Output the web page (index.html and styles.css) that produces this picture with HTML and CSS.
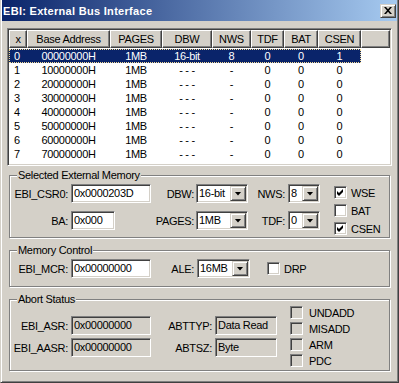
FILE: index.html
```html
<!DOCTYPE html>
<html><head>
<meta charset="utf-8">
<title>EBI: External Bus Interface</title>
<link rel="stylesheet" href="styles.css">
</head>
<body>
<div class="window">
 <div class="titlebar">
  <span class="title">EBI: External Bus Interface</span>
  <span class="closebtn"><svg width="8" height="7" viewBox="0 0 8 7"><path d="M0 0H2L4 2.3L6 0H8L5 3.5L8 7H6L4 4.7L2 7H0L3 3.5Z"/></svg></span>
 </div>

 <div class="client">

  <div class="listview">
   <div class="lvhead">
    <span class="hd c0">x</span>
    <span class="hd c1">Base Address</span>
    <span class="hd c2">PAGES</span>
    <span class="hd c3">DBW</span>
    <span class="hd c4">NWS</span>
    <span class="hd c5">TDF</span>
    <span class="hd c6">BAT</span>
    <span class="hd c7">CSEN</span>
    <span class="hd fill"></span>
   </div>
   <div class="lvbody">
    <div class="lvrow sel"><span class="c0">0</span><span class="c1">00000000H</span><span class="c2">1MB</span><span class="c3">16-bit</span><span class="c4">8</span><span class="c5">0</span><span class="c6">0</span><span class="c7">1</span></div>
    <div class="lvrow"><span class="c0">1</span><span class="c1">10000000H</span><span class="c2">1MB</span><span class="c3">- - -</span><span class="c4">-</span><span class="c5">0</span><span class="c6">0</span><span class="c7">0</span></div>
    <div class="lvrow"><span class="c0">2</span><span class="c1">20000000H</span><span class="c2">1MB</span><span class="c3">- - -</span><span class="c4">-</span><span class="c5">0</span><span class="c6">0</span><span class="c7">0</span></div>
    <div class="lvrow"><span class="c0">3</span><span class="c1">30000000H</span><span class="c2">1MB</span><span class="c3">- - -</span><span class="c4">-</span><span class="c5">0</span><span class="c6">0</span><span class="c7">0</span></div>
    <div class="lvrow"><span class="c0">4</span><span class="c1">40000000H</span><span class="c2">1MB</span><span class="c3">- - -</span><span class="c4">-</span><span class="c5">0</span><span class="c6">0</span><span class="c7">0</span></div>
    <div class="lvrow"><span class="c0">5</span><span class="c1">50000000H</span><span class="c2">1MB</span><span class="c3">- - -</span><span class="c4">-</span><span class="c5">0</span><span class="c6">0</span><span class="c7">0</span></div>
    <div class="lvrow"><span class="c0">6</span><span class="c1">60000000H</span><span class="c2">1MB</span><span class="c3">- - -</span><span class="c4">-</span><span class="c5">0</span><span class="c6">0</span><span class="c7">0</span></div>
    <div class="lvrow"><span class="c0">7</span><span class="c1">70000000H</span><span class="c2">1MB</span><span class="c3">- - -</span><span class="c4">-</span><span class="c5">0</span><span class="c6">0</span><span class="c7">0</span></div>
   </div>
  </div><!-- listview -->

  <fieldset class="group grp-sel">
   <legend>Selected External Memory</legend>
   <div class="grpbody top">
    <div class="grid f1">
     <span class="lbl">EBI_CSR0:</span>
     <span class="edit w80">0x0000203D</span>
     <span class="lbl">DBW:</span>
     <span class="combo wide"><span class="val">16-bit</span><span class="dd"></span></span>
     <span class="lbl">NWS:</span>
     <span class="combo narrow"><span class="val">8</span><span class="dd"></span></span>
     <span class="lbl">BA:</span>
     <span class="edit w44">0x000</span>
     <span class="lbl">PAGES:</span>
     <span class="combo wide"><span class="val">1MB</span><span class="dd"></span></span>
     <span class="lbl">TDF:</span>
     <span class="combo narrow"><span class="val">0</span><span class="dd"></span></span>
    </div>
    <div class="checks c18">
     <label class="chk"><span class="cb"><svg width="7" height="7" viewBox="0 0 7 7"><path d="M0 2L2 4L6 0V3L2 7L0 5Z"/></svg></span>WSE</label>
     <label class="chk"><span class="cb"></span>BAT</label>
     <label class="chk"><span class="cb"><svg width="7" height="7" viewBox="0 0 7 7"><path d="M0 2L2 4L6 0V3L2 7L0 5Z"/></svg></span>CSEN</label>
    </div>
   </div>
  </fieldset>

  <fieldset class="group grp-mem">
   <legend>Memory Control</legend>
   <div class="grid f2">
    <span class="lbl">EBI_MCR:</span>
    <span class="edit w80">0x00000000</span>
    <span class="lbl">ALE:</span>
    <span class="combo ale"><span class="val">16MB</span><span class="dd"></span></span>
    <label class="chk drp"><span class="cb"></span>DRP</label>
   </div>
  </fieldset>

  <fieldset class="group grp-abort">
   <legend>Abort Status</legend>
   <div class="grpbody mid">
    <div class="grid f3">
     <span class="lbl">EBI_ASR:</span>
     <span class="field w80">0x00000000</span>
     <span class="lbl">ABTTYP:</span>
     <span class="field w62">Data Read</span>
     <span class="lbl">EBI_AASR:</span>
     <span class="field w80">0x00000000</span>
     <span class="lbl">ABTSZ:</span>
     <span class="field w62">Byte</span>
    </div>
    <div class="checks c16">
     <label class="chk"><span class="cb off"></span>UNDADD</label>
     <label class="chk"><span class="cb off"></span>MISADD</label>
     <label class="chk"><span class="cb off"></span>ARM</label>
     <label class="chk"><span class="cb off"></span>PDC</label>
    </div>
   </div>
  </fieldset>

 </div><!-- client -->
</div><!-- window -->
</body></html>
```

FILE: styles.css
```css
html, body{
  margin: 0;
  padding: 0;
  background: #d4d0c8;
}
body{
  font: 11px "Liberation Sans", Arial, sans-serif;
  letter-spacing: -0.3px;
  color: #000;
}

/* window frame */
.window{
  box-sizing: border-box;
  width: 399px;
  height: 383px;
  border: 1px solid;
  border-top: 0;
  border-color: #d4d0c8 #404040 #404040 #d4d0c8;
  box-shadow: inset 1px 0 #fff, inset -1px -1px #808080;
  padding: 0 1px 1px 1px;
  background: #d4d0c8;
}
.titlebar{
  height: 21px;
  display: flex;
  align-items: center;
  justify-content: space-between;
  padding: 0 1px 0 1px;
  background: linear-gradient(to right, #0a246a, #a6caf0);
}
.title{
  color: #fff;
  font-weight: bold;
  letter-spacing: 0.3px;
  padding-top: 1px;
}
.closebtn{
  box-sizing: border-box;
  width: 16px;
  height: 14px;
  display: flex;
  align-items: center;
  justify-content: center;
  background: #d4d0c8;
  border: 1px solid;
  border-color: #d4d0c8 #404040 #404040 #d4d0c8;
  box-shadow: inset 1px 1px #fff, inset -1px -1px #808080;
}
.closebtn svg{
  display: block;
}

.client{
  padding: 7px 5px 0 5px;
}

/* list view */
.listview{
  box-sizing: border-box;
  height: 138px;
  border: 1px solid;
  border-color: #808080 #fff #fff #808080;
  box-shadow: inset 1px 1px #404040, inset -1px -1px #d4d0c8;
  padding: 1px;
  background: #fff;
  overflow: hidden;
}
.lvhead{
  display: flex;
  height: 18px;
}
.hd{
  box-sizing: border-box;
  height: 18px;
  line-height: 16px;
  text-align: center;
  background: #d4d0c8;
  border: 1px solid;
  border-color: #fff #404040 #404040 #fff;
  box-shadow: inset -1px -1px #808080;
}
.hd.fill{
  flex: 1;
}
.c0{ width: 18px; }
.c1{ width: 83px; }
.c2{ width: 52px; }
.c3{ width: 50px; }
.c4{ width: 39px; }
.c5{ width: 33px; }
.c6{ width: 34px; }
.c7{ width: 43px; }
.lvbody{
  padding-top: 1px;
}
.lvrow{
  display: flex;
  width: 352px;
  height: 14px;
  line-height: 14px;
}
.lvrow span{
  flex: none;
  text-align: center;
}
.lvrow span.c0{
  text-align: left;
  box-sizing: border-box;
  padding-left: 5px;
}
.lvrow.sel{
  background: #0a246a;
  color: #fff;
  outline: 1px dotted #f5db95;
  outline-offset: -1px;
}

/* group boxes */
.group{
  margin: 6px 2px 0 2px;
  padding: 2px 1px 0 1px;
  border: 1px solid #808080;
  box-shadow: inset 1px 1px #fff, 1px 1px #fff;
  min-width: 0;
}
.group legend{
  margin-left: 6px;
  padding: 0 1px;
  line-height: 13px;
  background: #d4d0c8;
}
.grp-sel{ margin-top: 3px; padding-bottom: 2px; }
.grp-mem{ padding-bottom: 8px; }
.grp-abort{ padding-top: 0; padding-bottom: 3px; }

.grpbody{
  display: flex;
}
.grpbody.top{ align-items: flex-start; }
.grpbody.mid{ align-items: center; }

.grid{
  display: grid;
  align-items: center;
}
.f1{
  grid-template-columns: 58px 82px 44px 53px 38px 34px;
  grid-template-rows: 19px 19px;
  row-gap: 8px;
}
.f2{
  grid-template-columns: 58px 82px 44px 55px auto;
  grid-template-rows: 19px;
}
.f3{
  grid-template-columns: 58px 82px 62px 64px;
  grid-template-rows: 19px 19px;
  row-gap: 3px;
}
.lbl{
  text-align: right;
  white-space: nowrap;
  padding-right: 1px;
}

/* controls */
.edit, .field, .combo{
  box-sizing: border-box;
  height: 19px;
  line-height: 15px;
  border: 1px solid;
  border-color: #808080 #fff #fff #808080;
  box-shadow: inset 1px 1px #404040, inset -1px -1px #d4d0c8;
  padding: 1px 2px;
  background: #fff;
  white-space: nowrap;
  overflow: hidden;
  justify-self: end;
}
.field{
  background: #d4d0c8;
}
.w80{ width: 80px; }
.w44{ width: 44px; justify-self: start; margin-left: 2px; }
.w62{ width: 62px; }
.combo{
  display: flex;
  padding: 1px;
}
.combo.wide{ width: 52px; }
.combo.ale{ width: 53px; }
.combo.narrow{ width: 32px; }
.combo .val{
  flex: 1;
  padding-left: 1px;
}
.dd{
  box-sizing: border-box;
  width: 16px;
  height: 15px;
  display: flex;
  align-items: center;
  justify-content: center;
  background: #d4d0c8;
  border: 1px solid;
  border-color: #d4d0c8 #404040 #404040 #d4d0c8;
  box-shadow: inset 1px 1px #fff, inset -1px -1px #808080;
}
.dd::after{
  content: "";
  width: 7px;
  height: 4px;
  background: #000;
  clip-path: polygon(0 0, 100% 0, 50% 100%);
}

.checks{
  display: flex;
  flex-direction: column;
}
.c18{
  gap: 5px;
  margin-left: 14px;
  margin-top: 2px;
}
.c16{
  gap: 3px;
  margin-left: 13px;
}
.chk{
  display: flex;
  align-items: center;
  gap: 4px;
  height: 13px;
  white-space: nowrap;
}
.c16 .chk{
  gap: 6px;
}
.drp{
  margin-left: 17px;
}
.cb{
  box-sizing: border-box;
  width: 13px;
  height: 13px;
  flex: none;
  display: flex;
  align-items: center;
  justify-content: center;
  border: 1px solid;
  border-color: #808080 #fff #fff #808080;
  box-shadow: inset 1px 1px #404040, inset -1px -1px #d4d0c8;
  background: #fff;
}
.cb.off{
  background: #d4d0c8;
}
.cb svg{
  display: block;
}
```
